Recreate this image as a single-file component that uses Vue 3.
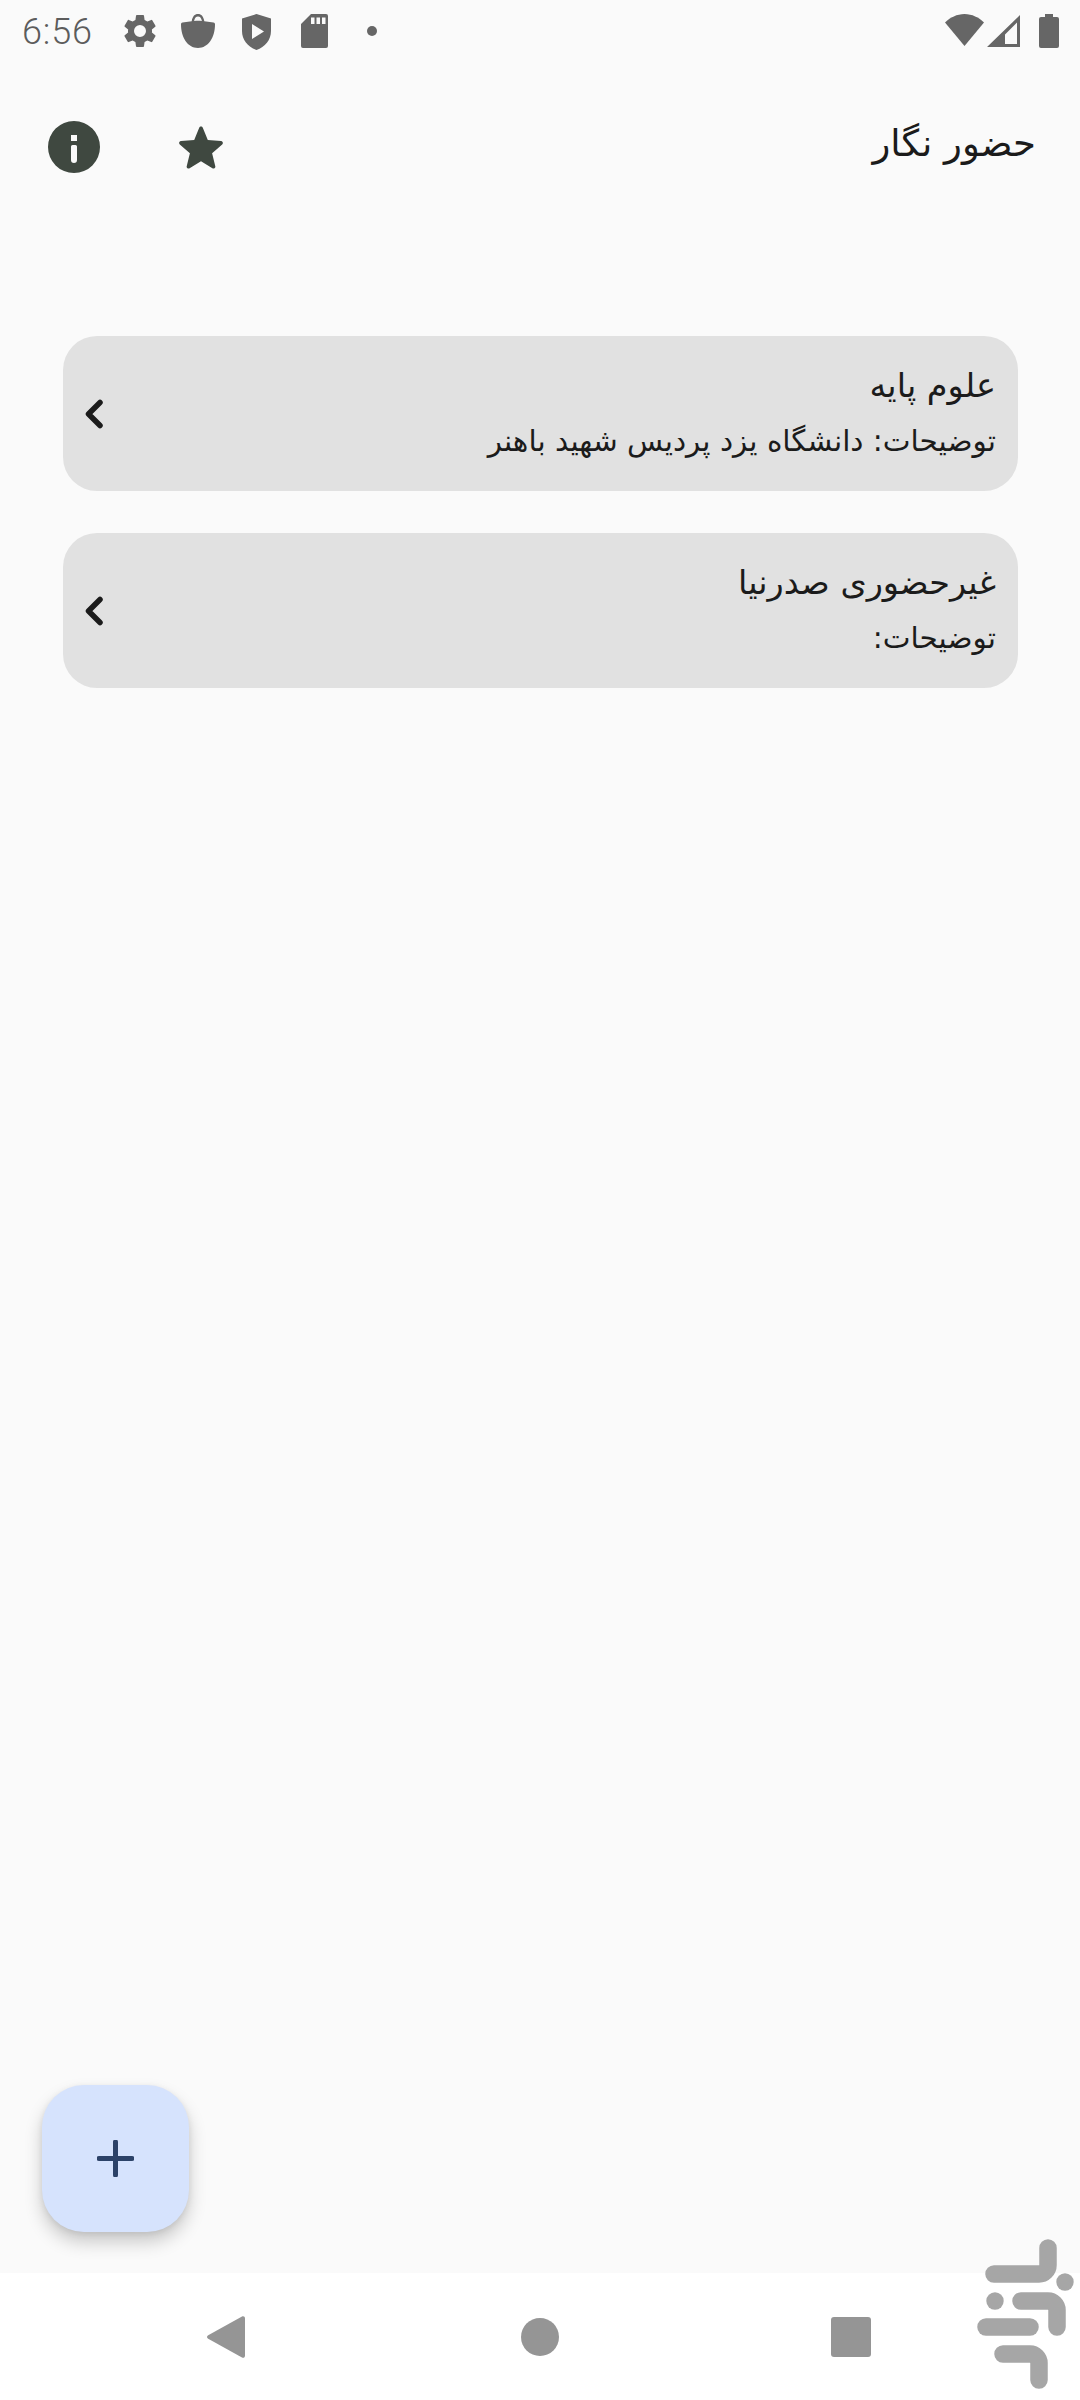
<template>
  <div class="screen">
    <div class="status-bar">
      <span class="time">6:56</span>
      <svg class="st gear" viewBox="0 0 24 24"><path d="M19.14 12.94c.04-.3.06-.61.06-.94 0-.32-.02-.64-.07-.94l2.03-1.58a.49.49 0 0 0 .12-.61l-1.92-3.32a.488.488 0 0 0-.59-.22l-2.39.96c-.5-.38-1.03-.7-1.62-.94l-.36-2.54a.484.484 0 0 0-.48-.41h-3.84c-.24 0-.43.17-.47.41l-.36 2.54c-.59.24-1.13.57-1.62.94l-2.39-.96c-.22-.08-.47 0-.59.22L2.74 8.87c-.12.21-.08.47.12.61l2.03 1.58c-.05.3-.09.63-.09.94s.02.64.07.94l-2.03 1.58a.49.49 0 0 0-.12.61l1.92 3.32c.12.22.37.29.59.22l2.39-.96c.5.38 1.03.7 1.62.94l.36 2.54c.05.24.24.41.48.41h3.84c.24 0 .44-.17.47-.41l.36-2.54c.59-.24 1.13-.56 1.62-.94l2.39.96c.22.08.47 0 .59-.22l1.92-3.32c.12-.22.07-.47-.12-.61l-2.01-1.58zM12 15.6A3.6 3.6 0 1 1 12 8.4a3.6 3.6 0 0 1 0 7.2z"/></svg>
      <svg class="st bag" viewBox="0 0 34 34"><path fill-rule="evenodd" d="M17 0c3.4 0 5.6 2.6 6.3 7.2l9.2 1.3c.9.1 1.5.9 1.5 1.8 0 13-6.500 23.700-17 23.700S0 23.300 0 10.300c0-.9.600-1.700 1.500-1.800l9.200-1.300C11.400 2.600 13.600 0 17 0zm0 2.600c-2 0-3.300 1.500-3.900 4.300 2.600-.2 5.200-.2 7.800 0-.6-2.800-1.900-4.300-3.900-4.300z"/></svg>
      <svg class="st shield" viewBox="0 0 29 36"><path fill-rule="evenodd" d="M14.500 0 29 4.500V17c0 9-6 16-14.500 19C6 33 0 26 0 17V4.500L14.500 0zM10 10v15l12-7.500L10 10z"/></svg>
      <svg class="st sd" viewBox="0 0 27 34"><path fill-rule="evenodd" d="M10 0h15a2 2 0 0 1 2 2v30a2 2 0 0 1-2 2H2a2 2 0 0 1-2-2V10L10 0zm0 3.500v6.500h3.500V3.500H10zm5.500 0v6.500H19V3.500h-3.500zm5.500 0v6.500h3.500V3.500H21z"/></svg>
      <span class="dot"></span>
      <span class="spacer"></span>
      <svg class="st wifi" viewBox="0 0 39 32"><path d="M19.500 32 0 8.500C5 3.500 12 0 19.500 0S34 3.500 39 8.500L19.500 32z"/></svg>
      <svg class="st signal" viewBox="0 0 33 32"><path fill-rule="evenodd" d="M33 0v32H0L33 0zm-3 7.500-12 12V29h12V7.500z"/></svg>
      <svg class="st battery" viewBox="0 0 20 34"><path d="M6 0h8v3h4a2 2 0 0 1 2 2v27a2 2 0 0 1-2 2H2a2 2 0 0 1-2-2V5a2 2 0 0 1 2-2h4V0z"/></svg>
    </div>

    <header class="app-bar">
      <div class="actions">
        <svg class="info" viewBox="0 0 52 52">
          <path fill-rule="evenodd" d="M26 0a26 26 0 1 1 0 52 26 26 0 0 1 0-52zm-3 14v6h6v-6h-6zm1.500 10a1.500 1.500 0 0 0-1.500 1.500V39a3 3 0 0 0 6 0V25.500a1.500 1.500 0 0 0-1.500-1.500h-3z"/>
        </svg>
        <svg class="star" viewBox="0 0 46 44">
          <path d="M23 1.500c.8 0 1.500.5 1.800 1.200l5 12.400 13.300 1c1.700.1 2.400 2.300 1.100 3.400L34.100 28.200l3.200 13c.4 1.700-1.400 3-2.900 2.100L23 36.300l-11.400 7c-1.500.9-3.300-.4-2.900-2.100l3.200-13L1.800 19.500c-1.300-1.100-.6-3.300 1.100-3.400l13.300-1 5-12.400c.3-.7 1-1.200 1.800-1.200z"/>
        </svg>
      </div>
      <h1 class="title" dir="rtl">{{ title }}</h1>
    </header>

    <main class="list">
      <div v-for="item in items" :key="item.name" class="card">
        <svg class="chevron" viewBox="0 0 20 30">
          <path d="M16 3.500 4.500 15 16 26.500" />
        </svg>
        <div class="card-text" dir="rtl">
          <div class="card-name">{{ item.name }}</div>
          <div class="card-desc">{{ item.desc }}</div>
        </div>
      </div>
      <button class="fab">
        <svg viewBox="0 0 37 37"><path d="M18.500 2v33M2 18.500h33" /></svg>
      </button>
    </main>

    <nav class="nav-bar">
      <svg class="nav-back" viewBox="0 0 38 42"><path d="M35 .5c1.500-.8 3 .2 3 1.800v37.400c0 1.600-1.500 2.600-3 1.800L1.200 22.800c-1.600-.9-1.600-2.700 0-3.600L35 .5z"/></svg>
      <span class="nav-home"></span>
      <span class="nav-recent"></span>
    </nav>

    <svg class="watermark" viewBox="0 0 100 152">
      <g fill="none" stroke="#a6a6a6" stroke-width="17.500" stroke-linecap="round" stroke-linejoin="round">
        <path d="M72 9v17a9 9 0 0 1-9 9H18" />
        <path d="M45 62h27a9 9 0 0 1 9 9v17" />
        <path d="M10 88h44" />
        <path d="M27 115h27a9 9 0 0 1 9 9v17" />
      </g>
      <circle cx="89" cy="43" r="8.700" fill="#a6a6a6" />
      <circle cx="19" cy="62" r="8.700" fill="#a6a6a6" />
    </svg>
  </div>
</template>

<script setup>
const title = 'حضور نگار'

const items = [
  { name: 'علوم پایه', desc: 'توضیحات: دانشگاه یزد پردیس شهید باهنر' },
  { name: 'غیرحضوری صدرنیا', desc: 'توضیحات:' }
]
</script>

<style>
html,
body {
  margin: 0;
  background: #fafafa;
}
</style>

<style scoped>
.screen {
  position: relative;
  width: 1080px;
  height: 2400px;
  display: flex;
  flex-direction: column;
  overflow: hidden;
  background: #fafafa;
  font-family: "DejaVu Sans", "Noto Sans", sans-serif;
  color: #1b1b1b;
}

.status-bar {
  height: 62px;
  display: flex;
  align-items: flex-start;
  padding: 14px 21px 0 22px;
  box-sizing: border-box;
  flex-shrink: 0;
}

.time {
  font-family: Roboto, sans-serif;
  font-weight: 300;
  font-size: 36px;
  line-height: 36px;
  color: #5c5c5c;
  width: 102px;
  letter-spacing: 0.8px;
}

.st {
  fill: #666;
  display: block;
}

.gear {
  width: 40px;
  height: 40px;
  margin: -3px 0 0 -4px;
}

.bag {
  width: 34px;
  height: 34px;
  margin: 0 0 0 21px;
}

.shield {
  width: 29px;
  height: 36px;
  margin-left: 27px;
}

.sd {
  width: 27px;
  height: 34px;
  margin-left: 30px;
}

.dot {
  width: 10px;
  height: 10px;
  border-radius: 50%;
  background: #666;
  margin: 12px 0 0 39px;
}

.spacer {
  flex: 1;
}

.wifi {
  width: 39px;
  height: 32px;
}

.signal {
  width: 33px;
  height: 32px;
  margin: 1px 0 0 3px;
}

.battery {
  width: 20px;
  height: 34px;
  margin-left: 19px;
}

.app-bar {
  height: 170px;
  flex-shrink: 0;
  display: flex;
  align-items: center;
  justify-content: space-between;
  padding: 0 44px 0 48px;
  box-sizing: border-box;
}

.actions {
  display: flex;
  align-items: center;
  gap: 78px;
}

.info {
  width: 52px;
  height: 52px;
  fill: #3f4840;
}

.star {
  width: 46px;
  height: 44px;
  fill: #3f4840;
}

.title {
  margin: -6px 0 0;
  font-size: 37px;
  font-weight: 400;
  line-height: 50px;
}

.list {
  position: relative;
  flex: 1;
  display: flex;
  flex-direction: column;
  gap: 42px;
  padding: 104px 62px 0 63px;
}

.card {
  height: 155px;
  flex-shrink: 0;
  border-radius: 34px;
  background: #e1e1e1;
  display: flex;
  align-items: center;
  justify-content: space-between;
  padding: 0 22px 0 21px;
}

.chevron {
  width: 20px;
  height: 30px;
  fill: none;
  stroke: #1b1b1b;
  stroke-width: 5.500;
  stroke-linecap: round;
  stroke-linejoin: round;
}

.card-text {
  display: flex;
  flex-direction: column;
  gap: 8px;
}

.card-name {
  font-size: 33.500px;
  line-height: 50px;
  margin-top: -4px;
}

.card-desc {
  font-size: 29.500px;
  line-height: 44px;
}

.fab {
  position: absolute;
  left: 42px;
  bottom: 41px;
  width: 147px;
  height: 147px;
  padding: 0;
  border: none;
  border-radius: 42px;
  background: #d6e3fd;
  box-shadow: 0 10px 18px rgba(0, 0, 0, 0.2), 0 2px 6px rgba(0, 0, 0, 0.08);
  display: flex;
  align-items: center;
  justify-content: center;
}

.fab svg {
  width: 37px;
  height: 37px;
  fill: none;
  stroke: #2c4268;
  stroke-width: 5;
  stroke-linecap: round;
}

.nav-bar {
  height: 127px;
  flex-shrink: 0;
  background: #fff;
  display: flex;
  align-items: center;
  padding: 0 209px 0 207px;
  box-sizing: border-box;
  justify-content: space-between;
}

.nav-back {
  width: 38px;
  height: 42px;
  fill: #959595;
}

.nav-home {
  width: 38px;
  height: 38px;
  margin-left: 4px;
  border-radius: 50%;
  background: #959595;
}

.nav-recent {
  width: 40px;
  height: 40px;
  border-radius: 3px;
  background: #959595;
}

.watermark {
  position: absolute;
  left: 976px;
  top: 2239px;
  width: 100px;
  height: 152px;
}
</style>
